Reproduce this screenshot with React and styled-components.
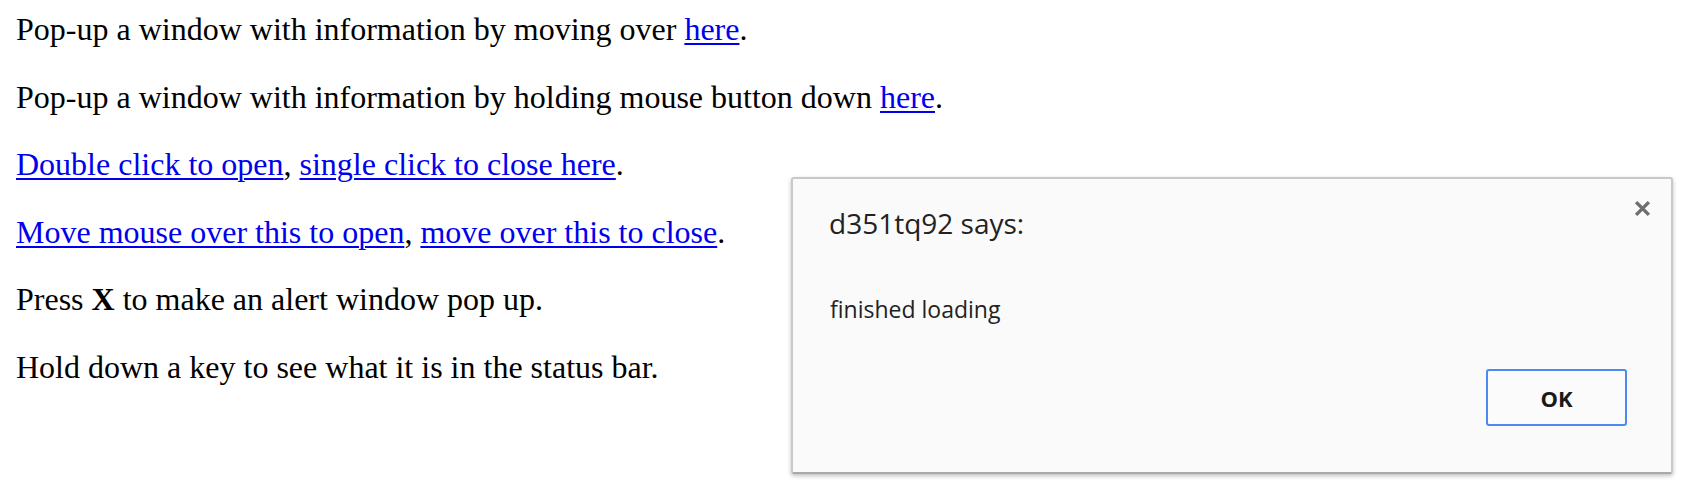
import React from "react";
import styled, { createGlobalStyle } from "styled-components";

const GlobalStyle = createGlobalStyle`
  html, body {
    margin: 0;
    background: #ffffff;
  }
  body {
    width: 1698px;
    height: 504px;
    overflow: hidden;
  }
`;

const Page = styled.div`
  position: relative;
  width: 1698px;
  height: 504px;
  padding: 11px 0 0 16px;
  box-sizing: border-box;
  font-family: "Liberation Serif", "Times New Roman", serif;
  font-size: 32px;
  line-height: 36px;
  color: #000;
`;

const Line = styled.p`
  margin: 0 0 31.5px;
  white-space: nowrap;
`;

const Link = styled.a`
  color: #0000ee;
  text-decoration: underline;
  text-decoration-thickness: 2px;
  text-underline-offset: 3px;
  cursor: pointer;
`;

const Dialog = styled.div`
  position: absolute;
  left: 791px;
  top: 177px;
  width: 882px;
  height: 297px;
  box-sizing: border-box;
  display: flex;
  flex-direction: column;
  background: #fafafa;
  border: 2px solid #c9c9c9;
  border-bottom-color: #a9a9a9;
  border-radius: 3px;
  box-shadow: 0 2px 4px rgba(0, 0, 0, 0.25);
  padding: 19px 19px 46px 36px;
  font-family: "Open Sans", "Noto Sans", sans-serif;
`;

const Header = styled.div`
  display: flex;
  justify-content: space-between;
  align-items: flex-start;
`;

const Title = styled.div`
  margin-top: 11px;
  font-size: 28px;
  line-height: 28px;
  color: #222;
`;

const Close = styled.button`
  width: 20px;
  height: 20px;
  padding: 0;
  border: none;
  background: none;
  display: flex;
  align-items: center;
  justify-content: center;
  color: #6e6e6e;
  cursor: pointer;
`;

const Message = styled.div`
  margin-top: 61px;
  padding-left: 1px;
  font-size: 23px;
  line-height: 23px;
  color: #222;
`;

const Footer = styled.div`
  margin-top: auto;
  display: flex;
  justify-content: flex-end;
  padding-right: 25px;
`;

const OkButton = styled.button`
  width: 141px;
  height: 57px;
  background: #fbfbfb;
  border: 2px solid #4d8af0;
  border-radius: 3px;
  font-family: "Open Sans", "Noto Sans", sans-serif;
  font-weight: 700;
  font-size: 22px;
  color: #1a1a1a;
  cursor: pointer;
`;

const CloseIcon = () => (
  <svg width="17" height="17" viewBox="0 0 16 16">
    <path d="M2 2 L14 14 M14 2 L2 14" stroke="currentColor" strokeWidth="3.2" />
  </svg>
);

export default function App() {
  return (
    <>
      <GlobalStyle />
      <Page>
        <Line>
          Pop-up a window with information by moving over <Link>here</Link>.
        </Line>
        <Line>
          Pop-up a window with information by holding mouse button down{" "}
          <Link>here</Link>.
        </Line>
        <Line>
          <Link>Double click to open</Link>, <Link>single click to close here</Link>.
        </Line>
        <Line>
          <Link>Move mouse over this to open</Link>,{" "}
          <Link>move over this to close</Link>.
        </Line>
        <Line>
          Press <b>X</b> to make an alert window pop up.
        </Line>
        <Line>Hold down a key to see what it is in the status bar.</Line>

        <Dialog>
          <Header>
            <Title>d351tq92 says:</Title>
            <Close>
              <CloseIcon />
            </Close>
          </Header>
          <Message>finished loading</Message>
          <Footer>
            <OkButton>OK</OkButton>
          </Footer>
        </Dialog>
      </Page>
    </>
  );
}
